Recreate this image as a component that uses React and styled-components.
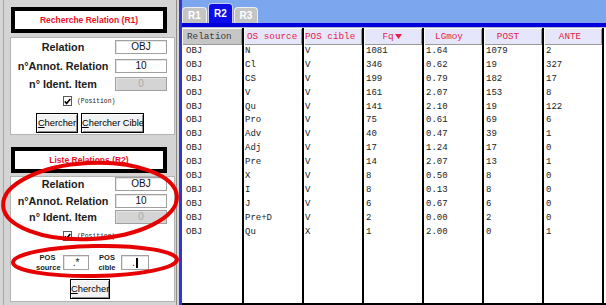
import React from "react";
import styled, { createGlobalStyle } from "styled-components";

const Global = createGlobalStyle`
  html, body { margin: 0; padding: 0; background: #fff; overflow: hidden; }
  #root { width: 606px; height: 305px; }
`;

const Window = styled.div`
  position: relative;
  display: flex;
  width: 606px;
  height: 305px;
  background: #d4d4d4;
  overflow: hidden;
  font-family: "Liberation Sans", Arial, sans-serif;
`;

const LeftPanel = styled.aside`
  flex: none;
  width: 177px;
  margin-right: 2px;
  box-sizing: border-box;
  padding: 7px 2px 3px 10px;
  background: linear-gradient(to right, #d4d4d4 3px, #a8a8a8 3px, #a8a8a8 4px, #d4d4d4 4px);
  border-right: 1px solid #8c8c8c;
  display: flex;
  flex-direction: column;
`;

const TitleBox = styled.div`
  box-sizing: border-box;
  width: 156px;
  height: 26px;
  margin: ${(p) => p.$mt || 0}px 0 0 1px;
  border: 4px solid #000;
  background: #fff;
  display: flex;
  align-items: center;
  justify-content: center;
  color: #e8102a;
  font-weight: bold;
  font-size: 8.5px;
  white-space: nowrap;
`;

const FormPanel = styled.div`
  box-sizing: border-box;
  width: 165px;
  margin-top: ${(p) => p.$mt}px;
  ${(p) => (p.$h ? `height: ${p.$h}px;` : "flex: 1;")}
  padding-top: ${(p) => p.$pt}px;
  background: #fff;
  border: 1px solid #b4b4b4;
  display: flex;
  flex-direction: column;
`;

const FieldGrid = styled.div`
  display: grid;
  grid-template-columns: 104px 52px;
  grid-auto-rows: 14px;
  row-gap: ${(p) => p.$gap}px;
  align-items: center;
`;

const Label = styled.div`
  text-align: center;
  font-weight: bold;
  font-size: 10.8px;
  line-height: 14px;
  color: #1c1c1c;
  white-space: nowrap;
`;

const Field = styled.div`
  box-sizing: border-box;
  width: ${(p) => p.$w || 52}px;
  height: ${(p) => p.$h || 14}px;
  border: 1px solid #a0a0a0;
  box-shadow: inset 1px 1px 0 #e4e4e4;
  background: ${(p) => (p.$disabled ? "#d4d4d4" : "#fff")};
  color: ${(p) => (p.$disabled ? "#a8a8a8" : "#111")};
  font-size: 10px;
  line-height: ${(p) => (p.$h || 14) - 2}px;
  text-align: center;
  display: flex;
  align-items: center;
  justify-content: center;
`;

const Caret = styled.span`
  display: inline-block;
  width: 2px;
  height: 10px;
  margin-left: 1px;
  background: #000;
`;

const CheckRow = styled.div`
  display: flex;
  align-items: center;
  gap: 5px;
  height: 10px;
  margin: ${(p) => p.$mt}px 0 0 52px;
`;

const CheckBox = styled.div`
  box-sizing: border-box;
  width: 9px;
  height: 10px;
  border: 1px solid #5a5a5a;
  background: #fff;
  display: flex;
  align-items: center;
  justify-content: center;
`;

const CheckText = styled.span`
  font-family: "Liberation Mono", monospace;
  font-size: 6.4px;
  color: #222;
`;

const ButtonRow = styled.div`
  display: flex;
  gap: 3px;
  margin: ${(p) => p.$mt}px 0 0 ${(p) => p.$ml}px;
`;

const Button = styled.button`
  box-sizing: border-box;
  width: ${(p) => p.$w}px;
  height: 20px;
  padding: 0;
  border: 1px solid #000;
  background: #f2f2f2;
  box-shadow: inset 1px 1px 0 #fff, inset -1px -1px 0 #8a8a8a;
  font-family: "Liberation Sans", Arial, sans-serif;
  font-size: 9.3px;
  color: #000;
  white-space: nowrap;
`;

const PosRow = styled.div`
  display: flex;
  align-items: center;
  height: 19px;
  margin: 12px 0 0 25px;
`;

const PosLabel = styled.div`
  width: ${(p) => p.$w}px;
  margin-right: ${(p) => p.$mr}px;
  font-weight: bold;
  font-size: 7.5px;
  line-height: 9.5px;
  text-align: center;
  color: #1c1c1c;
`;

const RightPanel = styled.main`
  flex: 1;
  display: flex;
  flex-direction: column;
  border-left: 3px solid #3434d4;
  background: #fff;
  min-width: 0;
`;

const TabBar = styled.div`
  height: 23px;
  flex: none;
  display: flex;
  align-items: flex-end;
  gap: 1px;
  padding-left: 0;
  background: #7ca6ee;
`;

const Tab = styled.div`
  box-sizing: border-box;
  width: ${(p) => p.$w}px;
  height: ${(p) => (p.$active ? 20 : 16)}px;
  border: 1px solid ${(p) => (p.$active ? "#c8d0ff" : "#eeeeee")};
  border-bottom: none;
  border-radius: 4px 4px 0 0;
  background: ${(p) => (p.$active ? "#0c0ce8" : "#c4c4c4")};
  color: #fff;
  font-weight: bold;
  font-size: 10px;
  display: flex;
  align-items: center;
  justify-content: center;
`;

const Band = styled.div`
  height: 4px;
  flex: none;
  background: #0000dc;
`;

const Columns = styled.div`
  flex: 1;
  display: flex;
  border-top: 1px solid #b8b8c8;
  border-bottom: 2px solid #000;
`;

const Column = styled.div`
  flex: none;
  box-sizing: border-box;
  width: ${(p) => p.$w}px;
  border-right: 2px solid #000;
  display: flex;
  flex-direction: column;
  overflow: hidden;
`;

const HeadCell = styled.div`
  box-sizing: border-box;
  height: 17px;
  line-height: 17px;
  padding: 0 ${(p) => p.$pr || 0}px 0 ${(p) => p.$pl || 0}px;
  text-align: ${(p) => p.$align || "left"};
  background: ${(p) => (p.$gray ? "#c6c6c6" : "#e6e6fa")};
  color: ${(p) => (p.$gray ? "#3a3a3a" : "#e8204a")};
  box-shadow: inset 0 1px 0 #fff, inset 1px 0 0 #fff, inset -1px -1px 0 #9a9a9a;
  font-family: "Liberation Mono", monospace;
  font-size: 9.3px;
  white-space: nowrap;
  overflow: hidden;
`;

const Cell = styled.div`
  height: 13.9px;
  line-height: 13.9px;
  padding-left: ${(p) => p.$pl}px;
  font-family: "Liberation Mono", monospace;
  font-size: 9px;
  color: #222;
  white-space: nowrap;
`;

const Overlay = styled.svg`
  position: absolute;
  left: 0;
  top: 0;
  width: 606px;
  height: 305px;
  pointer-events: none;
`;

const rows = [
  ["OBJ", "N", "V", "1081", "1.64", "1079", "2"],
  ["OBJ", "Cl", "V", "346", "0.62", "19", "327"],
  ["OBJ", "CS", "V", "199", "0.79", "182", "17"],
  ["OBJ", "V", "V", "161", "2.07", "153", "8"],
  ["OBJ", "Qu", "V", "141", "2.10", "19", "122"],
  ["OBJ", "Pro", "V", "75", "0.61", "69", "6"],
  ["OBJ", "Adv", "V", "40", "0.47", "39", "1"],
  ["OBJ", "Adj", "V", "17", "1.24", "17", "0"],
  ["OBJ", "Pre", "V", "14", "2.07", "13", "1"],
  ["OBJ", "X", "V", "8", "0.50", "8", "0"],
  ["OBJ", "I", "V", "8", "0.13", "8", "0"],
  ["OBJ", "J", "V", "6", "0.67", "6", "0"],
  ["OBJ", "Pre+D", "V", "2", "0.00", "2", "0"],
  ["OBJ", "Qu", "X", "1", "2.00", "0", "1"],
];

const columns = [
  { title: "Relation", w: 62, gray: true, hpl: 5, pl: 4 },
  { title: "OS source", w: 60, hpl: 3, pl: 1 },
  { title: "POS cible", w: 60, hpl: 1, pl: 1 },
  { title: "Fq", sort: true, w: 60, align: "center", hpr: 2, pl: 2 },
  { title: "LGmoy", w: 60, align: "center", hpr: 8, pl: 2 },
  { title: "POST", w: 60, align: "center", hpr: 10, pl: 2 },
  { title: "ANTE", w: 60, align: "center", hpr: 6, pl: 2 },
];

function Check() {
  return (
    <CheckBox>
      <svg width="7" height="7" viewBox="0 0 7 7">
        <path d="M0.8 3.4 L2.6 5.4 L6.3 0.9" stroke="#000" strokeWidth="1.6" fill="none" />
      </svg>
    </CheckBox>
  );
}

function Fields({ gap }) {
  return (
    <FieldGrid $gap={gap}>
      <Label>Relation</Label>
      <Field>OBJ</Field>
      <Label>n°Annot. Relation</Label>
      <Field>10</Field>
      <Label>n° Ident. Item</Label>
      <Field $disabled>0</Field>
    </FieldGrid>
  );
}

export default function App() {
  return (
    <>
      <Global />
      <Window>
        <LeftPanel>
          <TitleBox>Recherche Relation (R1)</TitleBox>
          <FormPanel $mt={4} $h={98} $pt={2}>
            <Fields gap={4.5} />
            <CheckRow $mt={5}>
              <Check />
              <CheckText>(Position)</CheckText>
            </CheckRow>
            <ButtonRow $mt={7} $ml={25}>
              <Button $w={42}><u>C</u>hercher</Button>
              <Button $w={63}><u>C</u>hercher Cible</Button>
            </ButtonRow>
          </FormPanel>

          <TitleBox $mt={12}>Liste Relations (R2)</TitleBox>
          <FormPanel $mt={3} $pt={0}>
            <Fields gap={2.5} />
            <CheckRow $mt={7}>
              <Check />
              <CheckText>(Position)</CheckText>
            </CheckRow>
            <PosRow>
              <PosLabel $w={23} $mr={4}>POS<br />source</PosLabel>
              <Field $w={26} $h={15}>.*</Field>
              <PosLabel $w={20} $mr={4} style={{ marginLeft: 8 }}>POS<br />cible</PosLabel>
              <Field $w={28} $h={15}>.<Caret /></Field>
            </PosRow>
            <ButtonRow $mt={7} $ml={59}>
              <Button $w={40}><u>C</u>hercher</Button>
            </ButtonRow>
          </FormPanel>
        </LeftPanel>

        <RightPanel>
          <TabBar>
            <Tab $w={25}>R1</Tab>
            <Tab $w={25} $active>R2</Tab>
            <Tab $w={24}>R3</Tab>
          </TabBar>
          <Band />
          <Columns>
            {columns.map((c, ci) => (
              <Column key={c.title} $w={c.w}>
                <HeadCell $gray={c.gray} $pl={c.hpl} $pr={c.hpr} $align={c.align}>
                  {c.title}
                  {c.sort && (
                    <svg width="7" height="5" viewBox="0 0 7 5" style={{ marginLeft: 1 }}>
                      <path d="M0 0 H7 L3.5 5 Z" fill="#e8204a" />
                    </svg>
                  )}
                </HeadCell>
                {rows.map((r, ri) => (
                  <Cell key={ri} $pl={c.pl}>{r[ci]}</Cell>
                ))}
              </Column>
            ))}
          </Columns>
        </RightPanel>

        <Overlay viewBox="0 0 606 305">
          <ellipse cx="90" cy="201" rx="87" ry="38" transform="rotate(-3 90 201)" stroke="#e60000" strokeWidth="4" fill="none" />
          <ellipse cx="95" cy="261" rx="82" ry="15" transform="rotate(-1 95 261)" stroke="#e60000" strokeWidth="4" fill="none" />
        </Overlay>
      </Window>
    </>
  );
}
